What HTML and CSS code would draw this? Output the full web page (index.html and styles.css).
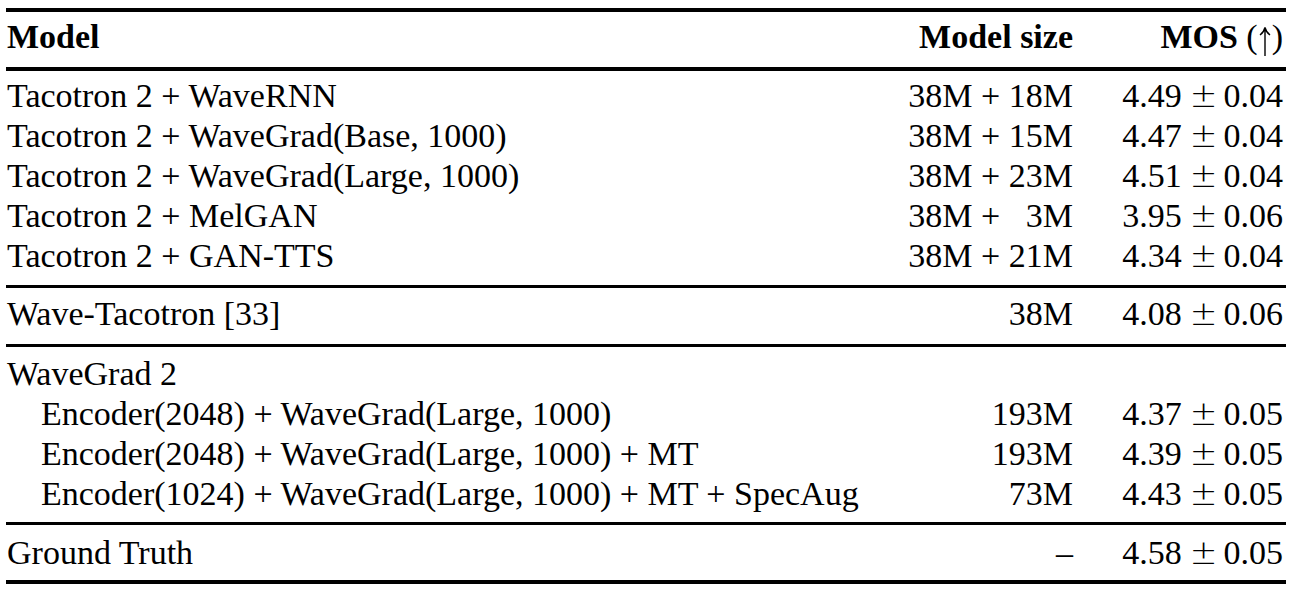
FILE: index.html
```html
<!DOCTYPE html>
<html lang="en">
<head>
<meta charset="utf-8">
<title>MOS comparison table</title>
<link rel="stylesheet" href="styles.css">
</head>
<body>
<div class="table">
  <div class="section head">
    <div class="row">
      <div class="c1">Model</div>
      <div class="c2">Model size</div>
      <div class="c3">MOS <span class="paren">(<svg class="arrow" width="12" height="30" viewBox="0 0 12 30"><path d="M6 2 V30 M1 9 Q5 6 6 1.5 Q7 6 11 9" fill="none" stroke="#000" stroke-width="1.4"/></svg>)</span></div>
    </div>
  </div>
  <div class="section s1">
    <div class="row"><div class="c1">Tacotron 2 + WaveRNN</div><div class="c2">38M + 18M</div><div class="c3">4.49<span class="pm">±</span>0.04</div></div>
    <div class="row"><div class="c1">Tacotron 2 + WaveGrad(Base, 1000)</div><div class="c2">38M + 15M</div><div class="c3">4.47<span class="pm">±</span>0.04</div></div>
    <div class="row"><div class="c1">Tacotron 2 + WaveGrad(Large, 1000)</div><div class="c2">38M + 23M</div><div class="c3">4.51<span class="pm">±</span>0.04</div></div>
    <div class="row"><div class="c1">Tacotron 2 + MelGAN</div><div class="c2">38M + <span class="ph">1</span>3M</div><div class="c3">3.95<span class="pm">±</span>0.06</div></div>
    <div class="row"><div class="c1">Tacotron 2 + GAN-TTS</div><div class="c2">38M + 21M</div><div class="c3">4.34<span class="pm">±</span>0.04</div></div>
  </div>
  <div class="section s2">
    <div class="row"><div class="c1">Wave-Tacotron [33]</div><div class="c2">38M</div><div class="c3">4.08<span class="pm">±</span>0.06</div></div>
  </div>
  <div class="section s3">
    <div class="row"><div class="c1">WaveGrad 2</div><div class="c2"></div><div class="c3"></div></div>
    <div class="row"><div class="c1 ind">Encoder(2048) + WaveGrad(Large, 1000)</div><div class="c2">193M</div><div class="c3">4.37<span class="pm">±</span>0.05</div></div>
    <div class="row"><div class="c1 ind">Encoder(2048) + WaveGrad(Large, 1000) + MT</div><div class="c2">193M</div><div class="c3">4.39<span class="pm">±</span>0.05</div></div>
    <div class="row"><div class="c1 ind">Encoder(1024) + WaveGrad(Large, 1000) + MT + SpecAug</div><div class="c2">73M</div><div class="c3">4.43<span class="pm">±</span>0.05</div></div>
  </div>
  <div class="section s4">
    <div class="row"><div class="c1">Ground Truth</div><div class="c2">–</div><div class="c3">4.58<span class="pm">±</span>0.05</div></div>
  </div>
</div>
</body>
</html>
```
FILE: styles.css
```css
html, body {
  margin: 0;
  padding: 0;
  background: #fff;
}
body {
  font-family: "Liberation Serif", "Times New Roman", serif;
  font-size: 34px;
  color: #000;
}
.table {
  width: 1280px;
  margin: 8px 6px 0;
  border-top: 4px solid #000;
}
.section {
  border-bottom: 3px solid #000;
}
.head {
  padding: 5px 0 10px;
  border-bottom-width: 4px;
  font-weight: bold;
}
.s1 { padding: 5px 0 9px; }
.s2 { padding: 6px 0 10px; }
.s3 { padding: 7px 0 8px; }
.s4 { padding: 8px 0 7px; border-bottom-width: 4px; }
.row {
  display: grid;
  grid-template-columns: 1fr 200px 213px;
  height: 40px;
  line-height: 40px;
  white-space: nowrap;
}
.c1 { padding-left: 1px; }
.c1.ind { padding-left: 35px; }
.c2 { text-align: right; }
.c3 { text-align: right; padding-right: 3px; }
.pm {
  font-family: "DejaVu Sans", sans-serif;
  font-weight: 300;
  font-size: 33px;
  margin: 0 6px 0 8px;
}
.ph { visibility: hidden; }
.paren { font-weight: normal; }
.arrow {
  vertical-align: -8px;
  margin: 0 1px;
}
```
